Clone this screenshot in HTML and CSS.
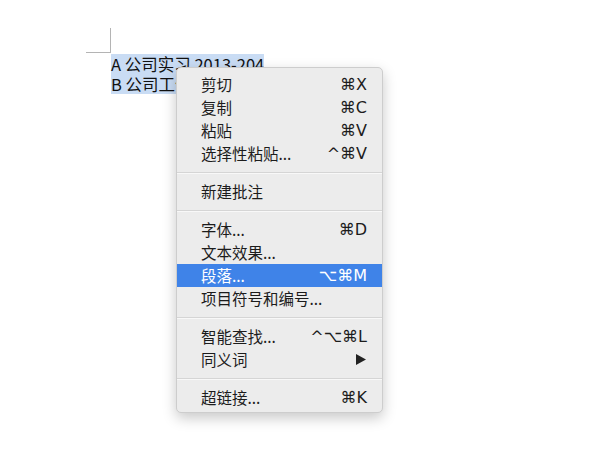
FILE: index.html
```html
<!DOCTYPE html>
<html lang="zh-CN">
<head>
    <meta charset="UTF-8">
    <title>右键菜单</title>
    <link rel="stylesheet" href="styles.css">
</head>
<body>
    <div class="page">
        <div class="crop-mark"></div>
        <div class="doc">
            <p class="line"><span class="sel">A 公司实习 2013-204</span></p>
            <p class="line"><span class="sel clipped">B 公司工作</span></p>
        </div>

        <div class="menu">
            <div class="item"><span>剪切</span><span class="key">⌘X</span></div>
            <div class="item"><span>复制</span><span class="key">⌘C</span></div>
            <div class="item"><span>粘贴</span><span class="key">⌘V</span></div>
            <div class="item"><span>选择性粘贴...</span><span class="key">^⌘V</span></div>
            <div class="sep"></div>
            <div class="item"><span>新建批注</span></div>
            <div class="sep"></div>
            <div class="item"><span>字体...</span><span class="key">⌘D</span></div>
            <div class="item"><span>文本效果...</span></div>
            <div class="item active"><span>段落...</span><span class="key">⌥⌘M</span></div>
            <div class="item"><span>项目符号和编号...</span></div>
            <div class="sep"></div>
            <div class="item"><span>智能查找...</span><span class="key">^⌥⌘L</span></div>
            <div class="item">
                <span>同义词</span>
                <svg class="arrow" width="10" height="11" viewBox="0 0 10 11"><path d="M0 0 L10 5.5 L0 11 Z" fill="#222"/></svg>
            </div>
            <div class="sep"></div>
            <div class="item"><span>超链接...</span><span class="key">⌘K</span></div>
        </div>
    </div>
</body>
</html>
```

FILE: styles.css
```css
* {
    margin: 0;
    padding: 0;
    box-sizing: border-box;
}

body {
    background: #fff;
    font-family: "Noto Sans CJK SC", "Noto Sans", sans-serif;
    color: #1c1c1c;
}

.page {
    position: relative;
    width: 600px;
    height: 459px;
    padding-top: 28px;
}

/* corner crop mark of the page margin */
.crop-mark {
    width: 25px;
    height: 25px;
    margin-left: 86px;
    border-right: 1px solid #b4b4b4;
    border-bottom: 1px solid #b4b4b4;
}

.doc {
    margin-left: 111px;
    margin-top: 1px;
    font-size: 16.5px;
}

.line {
    height: 20px;
}

.sel {
    display: inline-block;
    height: 20px;
    line-height: 20px;
    background: #c9dcf4;
    color: #111;
    white-space: nowrap;
    vertical-align: top;
}

/* the rest of this line sits under the menu */
.sel.clipped {
    width: 65px;
    overflow: hidden;
}

/* context menu */
.menu {
    position: absolute;
    left: 176px;
    top: 67px;
    width: 207px;
    padding: 5px 0 3px;
    background: #ececec;
    border: 1px solid #cdcdcd;
    border-radius: 5px;
    box-shadow: 0 5px 14px rgba(0, 0, 0, 0.22);
    font-size: 15.5px;
}

.item {
    display: flex;
    justify-content: space-between;
    align-items: center;
    height: 23px;
    padding: 0 15px 0 24px;
    line-height: 23px;
}

.key {
    font-family: "DejaVu Sans", "Liberation Sans", sans-serif;
    font-size: 16px;
}

.item.active {
    background: #3f83e8;
    color: #fff;
}

.arrow {
    margin-right: 1px;
}

.sep {
    height: 1px;
    margin: 7px 0;
    background: #d5d5d5;
    box-shadow: 0 1px 0 #f8f8f8;
}
```
